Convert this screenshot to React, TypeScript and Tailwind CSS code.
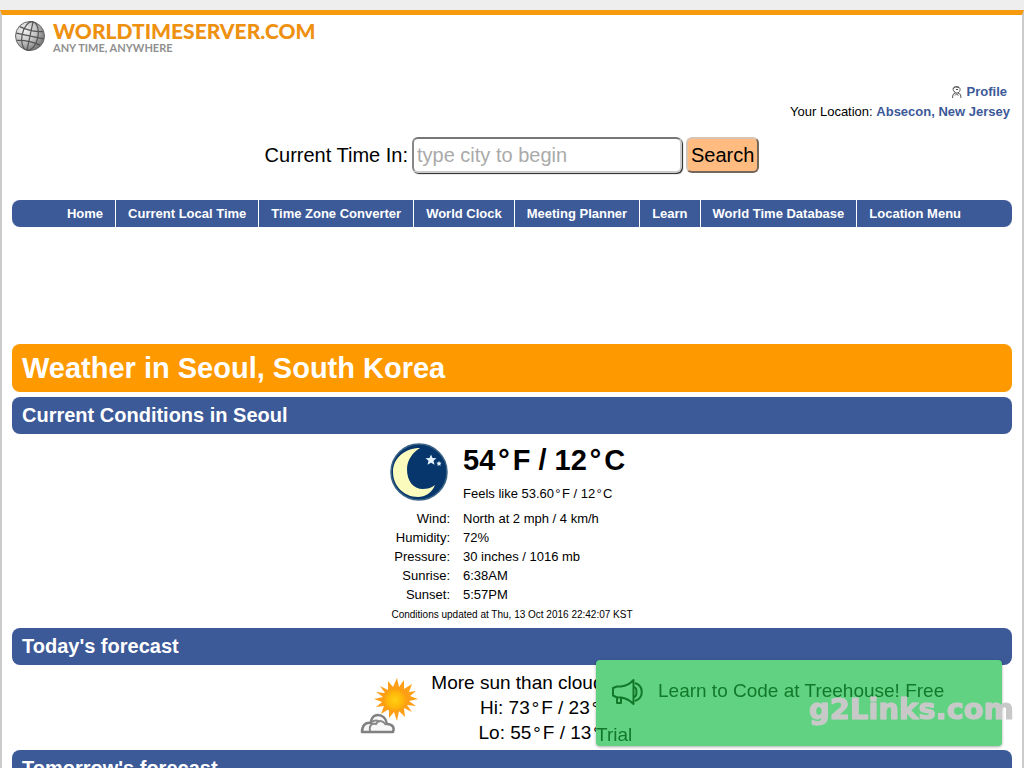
import React from 'react';

const navItems = [
  'Home',
  'Current Local Time',
  'Time Zone Converter',
  'World Clock',
  'Meeting Planner',
  'Learn',
  'World Time Database',
  'Location Menu',
];

const conditions = [
  { label: 'Wind:', value: 'North at 2 mph / 4 km/h' },
  { label: 'Humidity:', value: '72%' },
  { label: 'Pressure:', value: '30 inches / 1016 mb' },
  { label: 'Sunrise:', value: '6:38AM' },
  { label: 'Sunset:', value: '5:57PM' },
];

const GlobeIcon: React.FC = () => (
  <svg width="32" height="32" viewBox="0 0 32 32" fill="none" aria-hidden="true">
    <defs>
      <radialGradient id="globe" cx="0.3" cy="0.3" r="0.8">
        <stop offset="0" stopColor="#f4f4f4" />
        <stop offset="0.5" stopColor="#c4c4c4" />
        <stop offset="1" stopColor="#6c6c6c" />
      </radialGradient>
    </defs>
    <circle cx="16" cy="16" r="14.5" fill="url(#globe)" stroke="#6a6a6a" />
    <g stroke="#555" strokeWidth="1.2" transform="rotate(12 16 16)">
      <ellipse cx="16" cy="16" rx="8" ry="14.5" />
      <path d="M16 1.500v29M2 16h28M4 9q12 3 24 0M4 23q12-3 24 0" />
    </g>
  </svg>
);

const ProfileIcon: React.FC = () => (
  <svg width="12" height="14" viewBox="0 0 12 14" fill="none" stroke="#555" strokeWidth="1" aria-hidden="true">
    <path d="M3 6.500C1 4 2.500 1.500 5.500 1.500S10 4 8.500 6.500L7 8H4.500L3 6" />
    <path d="M2 3.500Q4 1 8 2.500M4.500 8L2 9.500L1.500 13M7 8l2.500 1.500.5 3.500M4 10.500l1.500-1.500 2 1.500M5 4.500h2" />
  </svg>
);

const MoonIcon: React.FC = () => (
  <svg width="58" height="58" viewBox="0 0 58 58" aria-hidden="true">
    <circle cx="29" cy="29" r="28" fill="#06366b" stroke="#3c6486" strokeWidth="1.500" />
    <path d="M30 5C15 5 3 15 3 29s11 25 25 25c7 0 14-4 17-12-4 3-8 4-12 4-10 0-16-8-16-20 0-9 6-17 13-21z" fill="#fbfbbd" />
    <path d="M41 11.500l1.500 3.500 4 .3-3 2.500 1 4-3.500-2-3.500 2 1-4-3-2.500 4-.3zM49 18l.8 1.600 1.800.2-1.300 1.300.3 1.800-1.600-.8-1.600.8.300-1.800-1.300-1.300 1.800-.2z" fill="#e4f2fb" />
  </svg>
);

const SunIcon: React.FC = () => (
  <svg width="58" height="58" viewBox="0 0 58 58" aria-hidden="true">
    <defs>
      <radialGradient id="sun">
        <stop offset="0" stopColor="#ffd012" />
        <stop offset="0.6" stopColor="#ffb80a" />
        <stop offset="1" stopColor="#fb9c12" />
      </radialGradient>
    </defs>
    <path
      d="M37 1l2 9 5-7 0 9 8-5-3 8 7-1-6 5 8 3-9 2 7 5-9-1 5 7-8-4 1 9-6-6-2 10-3-9-5 6 0-9-8 5 3-8-8 1 6-5-8-3 9-2-7-5 9 1-5-7 8 4 0-9 5 6z"
      fill="#ff9f18"
    />
    <circle cx="35" cy="23" r="12" fill="url(#sun)" />
    <path
      d="M2 55h31c2-5-1-8-6-8-1-6-5-9-9-9-5 0-7 4-7 8-6-1-9 3-9 9z"
      fill="#f7f7f7"
      stroke="#808080"
      strokeWidth="2.500"
      strokeLinejoin="round"
    />
    <path d="M10 54c-1-6 2-8 6-7 2-4 7-4 10 1M12 45c2-2 6-2 8 0" fill="none" stroke="#888" strokeWidth="2" />
  </svg>
);

const MegaphoneIcon: React.FC = () => (
  <svg width="32" height="28" viewBox="0 0 32 28" fill="none" stroke="#12792b" strokeWidth="2" aria-hidden="true">
    <path d="M22.500 2v24c-4-4-8-6-12.500-6.500V25H6v-5.500L2 17.500V10l4-1.500h4C15 8 19 6 22.500 2z" strokeLinejoin="round" />
    <path d="M22.500 9c4 0 4 10 0 10M24 5c9 3 9 15 0 18M10 19.500H6" />
  </svg>
);

// leading-none keeps the mono glyph from growing the line it sits in
const Degree: React.FC = () => <span className="font-['Liberation_Mono',monospace] leading-none">°</span>;

const SectionHeading: React.FC<{ children: React.ReactNode }> = ({ children }) => (
  <h2 className="rounded-lg bg-[#3c5998] px-[10px] text-[20px] leading-[37px] font-bold text-white">{children}</h2>
);

const App: React.FC = () => {
  return (
    <div className="bg-[#eeeeee] pt-[10px] font-['Liberation_Sans',Arial,sans-serif] text-[13px] text-black">
      <div className="border-x-2 border-t-[5px] border-x-[#cccccc] border-t-[#f79a0c] bg-white px-[10px]">
        <header>
          <a href="#home" className="flex h-[62px] items-start gap-[7px] pt-[5px] pl-[2px]">
            <GlobeIcon />
            <span className="flex flex-col font-['Lato','Liberation_Sans',sans-serif]">
              <span className="text-[21px] leading-[22px] font-black text-[#ee9010]">WORLDTIMESERVER.COM</span>
              <span className="text-[11px] leading-[11px] font-bold text-[#909090]">ANY TIME, ANYWHERE</span>
            </span>
          </a>
          <div className="flex flex-col items-end pt-[5px] leading-[20px]">
            <a href="#profile" className="flex items-center gap-1 pr-[5px] font-bold text-[#3c5998]">
              <ProfileIcon />
              Profile
            </a>
            <p className="pr-[2px]">
              Your Location:{' '}
              <a href="#location" className="font-bold text-[#3c5998]">
                Absecon, New Jersey
              </a>
            </p>
          </div>
          <form className="flex items-center justify-center pt-[15px] text-[20px]" onSubmit={(e) => e.preventDefault()}>
            <label htmlFor="city" className="mr-1">
              Current Time In:
            </label>
            <input
              id="city"
              type="text"
              placeholder="type city to begin"
              className="mr-1 h-9 w-[270px] rounded-md border-2 border-t-[#777777] border-r-[#cccccc] border-b-[#cccccc] border-l-[#888888] bg-white px-[3px] shadow-[1px_1px_1px_#222222] placeholder:text-[#aaaaaa]"
            />
            <button
              type="submit"
              className="h-9 rounded-md border-2 border-t-[#d6c4b4] border-r-[#75675b] border-b-[#75675b] border-l-[#d6c4b4] bg-[#ffbb80] px-[3px]"
            >
              Search
            </button>
          </form>
        </header>

        <nav className="mt-[27px] flex justify-center overflow-hidden rounded-lg bg-[#3c5998] pl-1 leading-[27px] font-bold text-white">
          {navItems.map((item) => (
            <a key={item} href="#nav" className="border-r border-white px-3 last:border-r-0">
              {item}
            </a>
          ))}
        </nav>

        <main className="mt-[117px]">
          <h1 className="rounded-lg bg-[#ff9900] px-[10px] text-[29px] leading-[48px] font-bold text-white">
            Weather in Seoul, South Korea
          </h1>

          <section className="mt-[5px]">
            <SectionHeading>Current Conditions in Seoul</SectionHeading>
            <div className="flex flex-col items-center pt-[9px] pb-[3px]">
              <table className="w-[244px]">
                <tbody>
                  <tr>
                    <td className="w-[60px] align-top">
                      <MoonIcon />
                    </td>
                    <td className="pb-[4px] pl-[13px] align-top whitespace-nowrap">
                      <p className="text-[29px] leading-[34px] font-bold">
                        54<Degree />F / 12<Degree />C
                      </p>
                      <p className="pt-[6px] leading-[22px]">
                        Feels like 53.60<Degree />F / 12<Degree />C
                      </p>
                    </td>
                  </tr>
                  {conditions.map(({ label, value }) => (
                    <tr key={label} className="leading-[19px]">
                      <th scope="row" className="p-0 text-right font-normal">
                        {label}
                      </th>
                      <td className="pl-[13px]">{value}</td>
                    </tr>
                  ))}
                </tbody>
              </table>
              <p className="pt-px text-[10px] leading-[20px]">Conditions updated at Thu, 13 Oct 2016 22:42:07 KST</p>
            </div>
          </section>

          <section>
            <SectionHeading>Today's forecast</SectionHeading>
            <div className="flex justify-center gap-[13px] py-[5px] text-[19px] leading-[25px]">
              <div className="pt-[7px]">
                <SunIcon />
              </div>
              <div className="text-center">
                <p>More sun than clouds. Mild.</p>
                <p>
                  Hi: 73<Degree />F / 23<Degree />C
                </p>
                <p>
                  Lo: 55<Degree />F / 13<Degree />C
                </p>
              </div>
            </div>
          </section>

          <section>
            <SectionHeading>Tomorrow's forecast</SectionHeading>
          </section>
        </main>
      </div>

      <aside className="fixed right-[22px] bottom-[22px] w-[406px] rounded-sm bg-[#60d281] pr-6 text-[19px] leading-[22px] text-[#12792b] shadow-[0_1px_3px_#00000055]">
        <span className="mr-[15px] ml-[15px] inline-flex h-16 items-center align-middle">
          <MegaphoneIcon />
        </span>
        Learn to Code at Treehouse! Free Trial
      </aside>
      <p className="fixed right-[10px] bottom-[42px] font-['DejaVu_Sans',sans-serif] text-[29px] leading-[34px] font-bold text-[#c8c8c8] [-webkit-text-stroke:1px_#c8c8c8] [text-shadow:0_0_1px_#ffffff]">
        g2Links.com
      </p>
    </div>
  );
};

export default App;
